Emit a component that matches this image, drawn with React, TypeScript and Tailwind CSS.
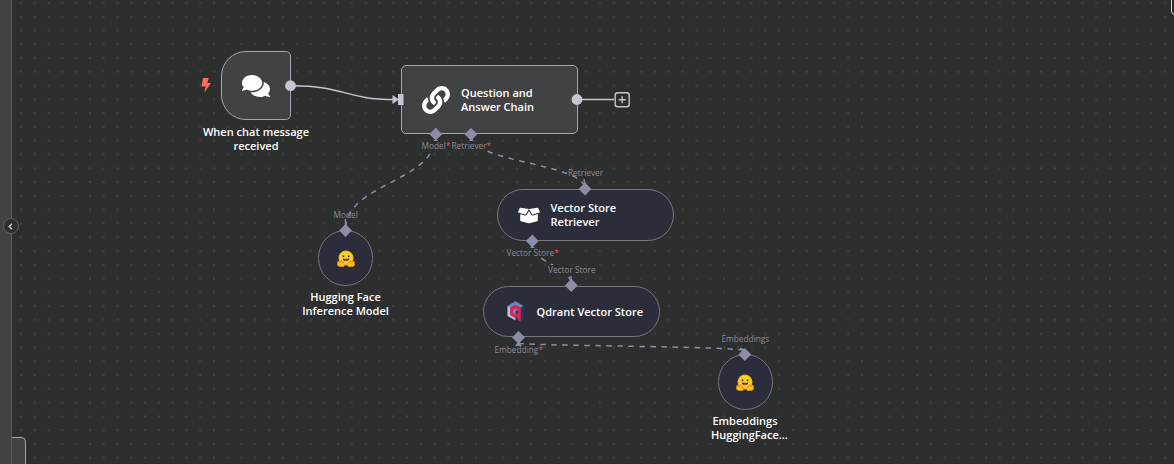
import React from 'react';
import { FaBoxOpen, FaComments, FaLink } from 'react-icons/fa';

function HuggingFace() {
  return (
    <svg viewBox="0 0 36 34" className="h-[17px] w-[18px]">
      <circle cx="18" cy="16" r="15" fill="#f5a623" />
      <circle cx="18" cy="16" r="13.2" fill="#ffd21e" />
      <ellipse cx="12.8" cy="12.4" rx="2" ry="2" fill="#3a3b45" />
      <ellipse cx="23.2" cy="12.4" rx="2" ry="2" fill="#3a3b45" />
      <path d="M11.500 16.500c2 1.400 11 1.400 13 0 0 4.500-2.800 5.800-6.500 5.800s-6.500-1.300-6.500-5.800z" fill="#3a3b45" />
      <path d="M14.500 20.500c2-1.800 5-1.800 7 0-2 2-5 2-7 0z" fill="#ef4e4e" />
      <path d="M1.500 24c0-2 2.500-2 4 0l2 2c-1-4 0-6 2-5l5 7c1.500 3 0 5.500-4 5.500-6 0-9.500-2-10-4.500-.3-1.500 1-2 1-2s-.8-1.500 0-3z" fill="#fcc21b" stroke="#dd8f1c" strokeWidth="1.800" />
      <path d="M34.500 24c0-2-2.500-2-4 0l-2 2c1-4 0-6-2-5l-5 7c-1.500 3 0 5.500 4 5.500 6 0 9.500-2 10-4.500.3-1.500-1-2-1-2s.8-1.500 0-3z" fill="#fcc21b" stroke="#dd8f1c" strokeWidth="1.800" />
    </svg>
  );
}

function Qdrant() {
  return (
    <svg viewBox="0 0 48 60" className="h-[21px] w-[17px] shrink-0">
      <path d="M24 1 47 14 38 20 24 12 10 20 1 14Z" fill="#6f86c0" />
      <path d="M1 14 10 19v21l14 8v8L1 43Z" fill="#b6c2e8" />
      <path d="M38 19 47 14v42l-9 3Z" fill="#24386c" />
      <path d="M24 11 39 19.500V59L30 54v-8l-6 3L9 40V19.500Z" fill="#dc244c" />
      <path d="M24 21 31 25v10l-7 4-7-4V25Z" fill="#7589c4" />
      <path d="M24 30 31 25v10l-7 4Z" fill="#24386c" />
    </svg>
  );
}

function Title({ children }: { children: React.ReactNode }) {
  return <div className="text-[11.020px] leading-[14px] font-semibold whitespace-nowrap text-white">{children}</div>;
}

function PortLabel({ className, required, children }: { className: string; required?: boolean; children: string }) {
  return (
    <div className={`absolute text-[8.300px] leading-[9px] whitespace-nowrap text-[#8b8c96] ${className}`}>
      {children}
      {required && <span className="text-[#ff4d52]">*</span>}
    </div>
  );
}

function Grid() {
  return (
    <svg viewBox="12 0 1162 464" className="absolute inset-0 h-full w-full">
      <defs>
        <pattern id="dots" x="14.100" y="-4.050" width="13.785" height="13.785" patternUnits="userSpaceOnUse">
          <circle cx="6.900" cy="6.900" r="0.650" fill="#5c5d60" />
        </pattern>
      </defs>
      <rect x="12" width="1162" height="464" fill="url(#dots)" />
    </svg>
  );
}

function Edges() {
  return (
    <svg viewBox="12 0 1162 464" className="absolute inset-0 h-full w-full" fill="none">
      <path d="M290.500 85.700C345 85.700 345 99.500 394 99.500" stroke="#c3c7d2" strokeWidth="1.500" />
      <path d="M577 99.500H614" stroke="#c3c7d2" strokeWidth="1.500" />
      <g stroke="#8d8da8" strokeWidth="1.500" strokeDasharray="5.500 5.500">
        <path d="M436 134.500C436 182.500 345.500 182.500 345.500 230" strokeDashoffset="1.500" />
        <path d="M471 135.500C471 163 585 163 585 189" strokeDashoffset="-2.200" />
        <path d="M532.500 242.500C532.500 265 571.300 265 571.300 285" strokeDashoffset="3.200" />
        <path d="M518.500 343C518.500 346 745 346 745 351" />
      </g>
      <path d="M345.500 219V229M584 179 585 188M571 276V285M740 348.500 745 350" stroke="#8d8da8" strokeWidth="1.400" />
    </svg>
  );
}

function Ports() {
  const diamonds = [
    [435.8, 134.2, 1],
    [471, 134.2, 1],
    [532.3, 241, 1],
    [518.5, 337.5, 1],
    [345.5, 230.5, 0],
    [585, 189, 0],
    [571.3, 285.5, 0],
    [744.8, 354.5, 0],
  ];
  return (
    <svg viewBox="12 0 1162 464" className="absolute inset-0 h-full w-full">
      {diamonds.map(([x, y, tail]) => (
        <g key={`${x}-${y}`} transform={`translate(${x} ${y})`} fill="#8d8da8">
          <path d="M0-6.400 6.400 0 0 6.400-6.400 0Z" />
          {tail === 1 && <path d="M0 4 3.500 8.500H-3.500Z" />}
        </g>
      ))}
      <circle cx="290.500" cy="85.700" r="5.400" fill="#c3c7d2" />
      <circle cx="577" cy="99.500" r="5.400" fill="#c3c7d2" />
      <path d="M392.500 95 399 99.500 392.500 104Z" fill="#c3c7d2" />
      <rect x="398" y="94" width="5.500" height="11" fill="#c3c7d2" />
      <rect x="615.200" y="92.700" width="14" height="14" rx="2.500" fill="#2d2e2e" stroke="#c3c7d2" strokeWidth="1.400" />
      <path d="M622.200 96.200V103.200M618.700 99.700H625.700" stroke="#c3c7d2" strokeWidth="1.400" />
    </svg>
  );
}

function ModelNode({ className, children }: { className: string; children: React.ReactNode }) {
  return (
    <div className={`absolute flex w-[120px] flex-col items-center gap-[4px] text-center ${className}`}>
      <div className="flex h-[56px] w-[55px] items-center justify-center rounded-full border border-[#77777d] bg-[#2c2d3b]">
        <HuggingFace />
      </div>
      <Title>{children}</Title>
    </div>
  );
}

export default function App() {
  return (
    <div className="flex h-[464px] w-full overflow-hidden bg-[#2d2e2e] font-['Open_Sans',sans-serif]">
      <aside className="relative z-10 flex w-[12px] shrink-0 items-center border-r border-[#5d5e60] bg-[#414244]">
        <button className="absolute top-[218px] left-[3px] flex h-[16px] w-[16px] items-center justify-center rounded-full border border-[#5d5e60] bg-[#2d2e2e]">
          <svg viewBox="0 0 6 8" className="mr-[1px] h-[7px] w-[5px]" fill="none">
            <path d="M4.700.8 1.500 4 4.700 7.200" stroke="#d0d1d8" strokeWidth="1.600" />
          </svg>
        </button>
      </aside>

      <main className="relative flex-1 overflow-hidden">
        <Grid />
        <Edges />

        <div className="absolute top-[51px] left-[184px] flex w-[120px] flex-col items-center gap-[5px] text-center">
          <div className="flex items-center gap-[10px] pr-[21px]">
            <svg viewBox="0 0 10 15" className="h-[15px] w-[10px]">
              <path d="M2 0H7.800L6.300 4.900H10L3.300 14.800 4.600 8.500H.4Z" fill="#ff6d5a" />
            </svg>
            <div className="flex h-[69px] w-[70px] items-center justify-center rounded-l-[25px] rounded-r-[5px] border border-[#a5a6b2] bg-[#414244]">
              <FaComments className="h-[28px] w-[28px] text-white" />
            </div>
          </div>
          <Title>When chat message<br />received</Title>
        </div>

        <div className="absolute top-[65px] left-[388.500px] flex h-[69px] w-[177px] items-center gap-[11px] rounded-[5px] border border-[#a5a6b2] bg-[#414244] pl-[20.500px]">
          <FaLink className="h-[28px] w-[28px] text-white" />
          <Title>Question and<br />Answer Chain</Title>
        </div>

        <div className="absolute top-[189px] left-[485px] flex h-[52px] w-[177px] items-center gap-[10.500px] rounded-full border border-[#77777d] bg-[#2c2d3b] pl-[20px]">
          <FaBoxOpen className="h-[21px] w-[22px] text-white" />
          <Title>Vector Store<br />Retriever</Title>
        </div>

        <div className="absolute top-[286px] left-[471px] flex h-[51px] w-[177px] items-center gap-[12.500px] rounded-full border border-[#77777d] bg-[#2c2d3b] pl-[23px]">
          <Qdrant />
          <Title>Qdrant Vector Store</Title>
        </div>

        <ModelNode className="top-[230px] left-[273.500px]">Hugging Face<br />Inference Model</ModelNode>
        <ModelNode className="top-[354px] left-[673px]">
          Embeddings<br /><span className="pl-[9px]">HuggingFace...</span>
        </ModelNode>

        <Ports />
        <PortLabel required className="top-[141px] left-[409.500px] bg-[#2d2e2e]">Model</PortLabel>
        <PortLabel required className="top-[141px] left-[439.500px] bg-[#2d2e2e]">Retriever</PortLabel>
        <PortLabel className="top-[210px] left-[321.500px]">Model</PortLabel>
        <PortLabel className="top-[168px] left-[556px]">Retriever</PortLabel>
        <PortLabel required className="top-[248px] left-[494.500px] bg-[#2d2e2e]">Vector Store</PortLabel>
        <PortLabel className="top-[265px] left-[536px] bg-[#2d2e2e]">Vector Store</PortLabel>
        <PortLabel required className="top-[345px] left-[482.500px]">Embedding</PortLabel>
        <PortLabel className="top-[334px] left-[709.500px]">Embeddings</PortLabel>

        <div className="absolute top-[437px] left-0 h-[30px] w-[14px] rounded-tr-[5px] border-t border-r border-[#a5a6b2] bg-[#414244]" />
        <div className="absolute top-[-10px] left-[1159px] h-[25px] w-[20px] rounded-bl-[4px] border border-[#d6d7dd] bg-[#2d2e2e]" />
      </main>
    </div>
  );
}
